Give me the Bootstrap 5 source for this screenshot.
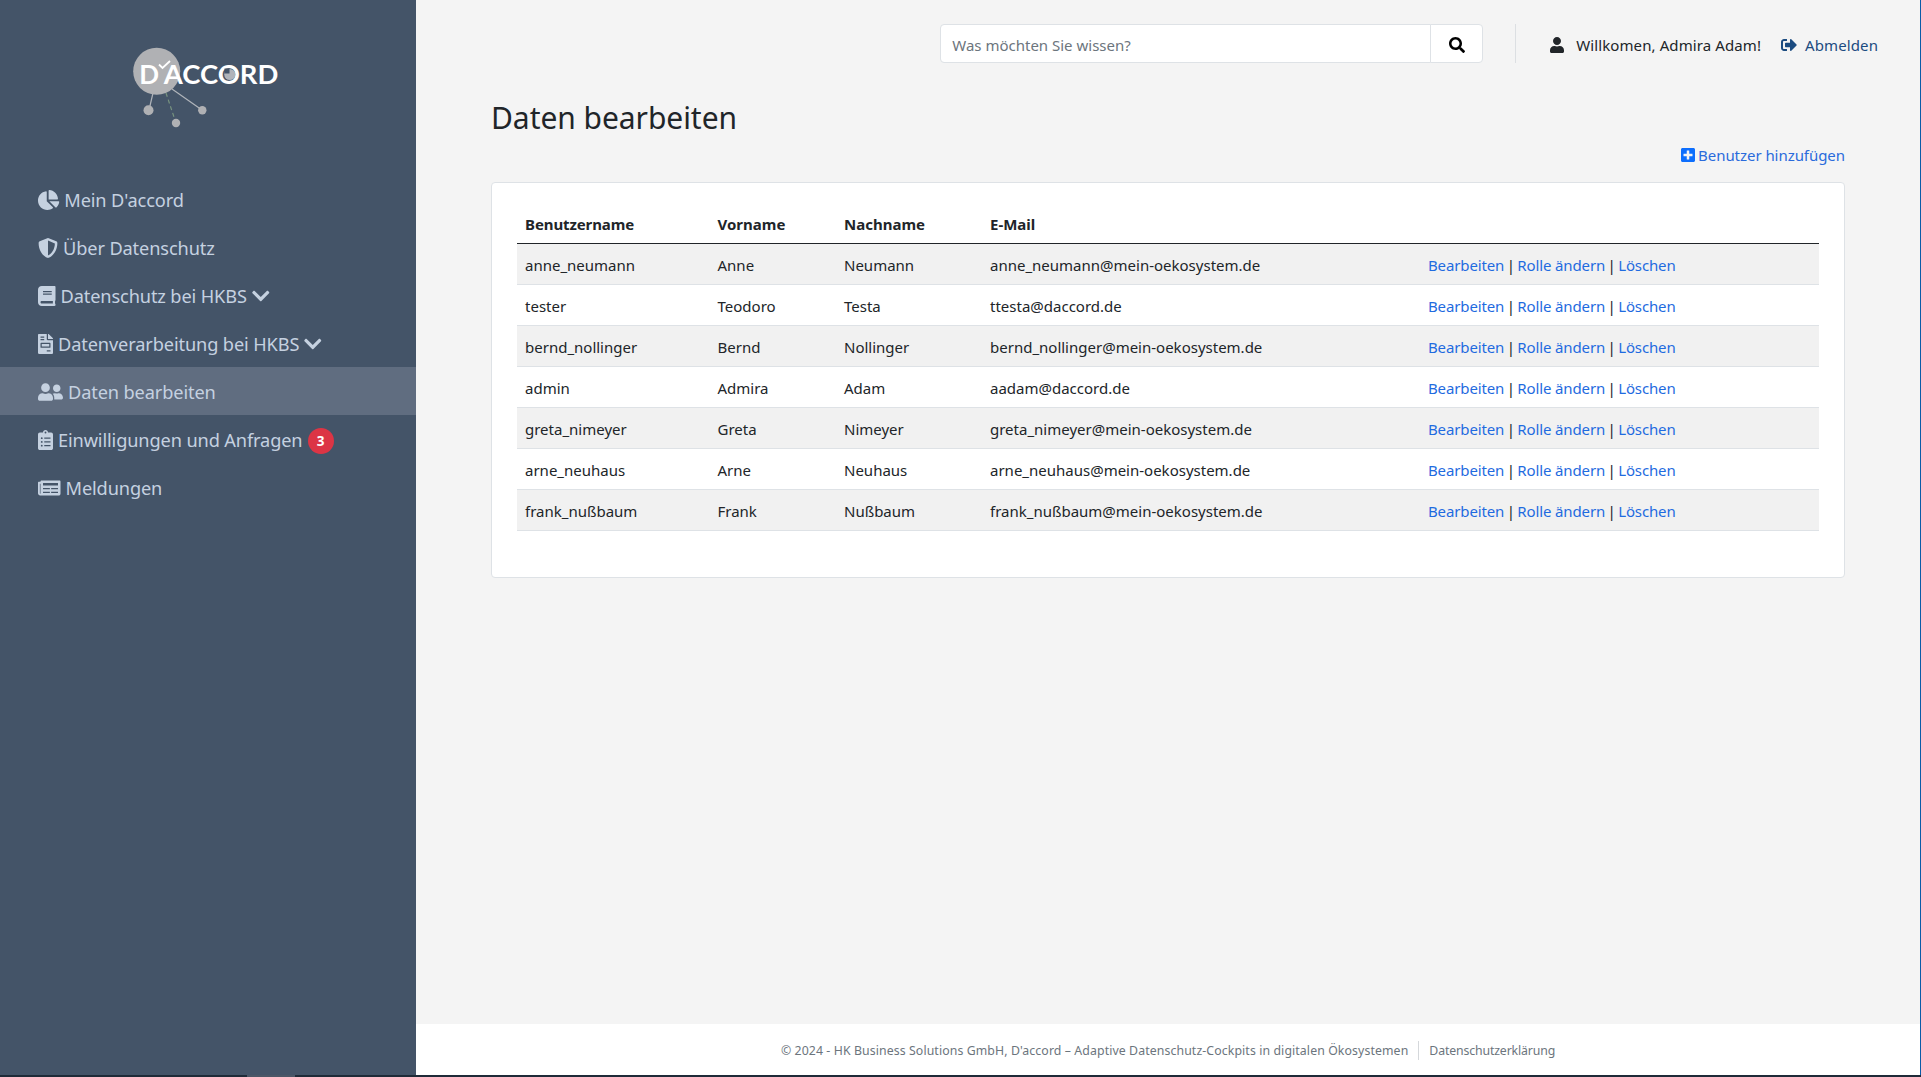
<!DOCTYPE html>
<html lang="de">
<head>
<meta charset="utf-8">
<title>Daten bearbeiten - D'accord</title>
<link href="https://cdn.jsdelivr.net/npm/bootstrap@5.3.0/dist/css/bootstrap.min.css" rel="stylesheet">
<style>
body{font-family:"Noto Sans","Open Sans",sans-serif;font-size:15px;line-height:24px;background:#f4f4f4;color:#212529;height:1077px;overflow:hidden}
a{text-decoration:none;color:#1f6be0}
svg{fill:currentColor}
.ico{height:1em;width:auto;overflow:visible;flex:none}
.app-shell{height:1075px;border-right:1px solid #0a5ca8}
.side{width:416px;background:#445468}
.logo-box{height:175px}
.side .nav-link{height:48px;padding:2px 0 0 38px;color:#c5d1e0;font-size:18.2px;letter-spacing:-.12px;display:flex;align-items:center;gap:5px;border-radius:0}
.side .nav-link.active{background:#606d80}
.side .ico{font-size:20px}
.side .count{width:26px;height:26px;font-size:13.5px;line-height:26px;padding:0;margin-top:1px}
.topbar{height:88px;padding:24px 42px 25px 0}
.search{width:543px;height:39px}
.search .form-control{font-size:15px;border-color:#dee2e6;padding:3px 11px 0;border-radius:4px 0 0 4px}
.search .form-control::placeholder{color:#6c757d;opacity:1}
.search .btn{width:53px;background:#fff;border:1px solid #dee2e6;border-radius:0 4px 4px 0;color:#000;padding:0}
.search .ico,.topbar .ico{font-size:16px}
.who{border-left:1px solid #dcdfe2;margin-left:32px;padding:2px 0 0 34px;letter-spacing:.1px}
.logout{color:#1b4b80}
.content-area{padding:0 75px}
h1{font-size:30px;line-height:38px;font-weight:400;margin:11px 0 6px;letter-spacing:-.05px}
.add-link{color:#0d6efd;letter-spacing:-.05px}
.add-link span{color:#2a6bdc}
.add-link .ico{font-size:16px;margin-right:3px}
.panel{border:1px solid #dee2e6;border-radius:4px;background:#fff;padding:20px 25px;height:396px;margin-top:15px}
.table{table-layout:fixed;--bs-table-striped-bg:#f1f1f1;border-color:#dee2e6;margin:0;--bs-table-color:#212529}
.table>thead>tr>th{border-bottom:1px solid #212529}
.table>thead>tr>th:first-child{letter-spacing:-.1px}
.table>:not(caption)>*>*{padding:9px 8px 7px}
.table thead tr{height:40px}
.table tbody tr{height:41px}
.table .c-user{width:192.5px}
.table .c-first{width:126.5px}
.table .c-last{width:146px}
.table .c-mail{width:438px}
.acts{word-spacing:-1.5px}
.acts a{word-spacing:0;letter-spacing:-.13px}
.foot{height:51px;background:#fff;color:#6c757d;font-size:12.3px;line-height:19px;padding-top:2px;letter-spacing:.1px}
.foot a{color:#6c757d;border-left:1px solid #d5d8db;margin-left:10px;padding-left:10px;letter-spacing:-.14px}
.taskbar{height:2px;background:#1f2b38}
.taskbar div{width:48px;height:2px;margin-left:247px;background:#4c5767}
</style>
<script src="https://cdn.jsdelivr.net/npm/bootstrap@5.3.0/dist/js/bootstrap.bundle.min.js"></script>
</head>
<body>
<div class="app-shell d-flex">
<aside class="side flex-shrink-0">
<div class="logo-box">
<svg width="416" height="175" viewBox="0 0 416 175"><g fill="#b0b1b4" stroke="#b0b4ba" stroke-width="1.2"><path d="M153 93L149 110M172 89L202 110" fill="none"/><path d="M166 93L175 120" stroke="#77937f" stroke-dasharray="4 3" fill="none"/><g stroke="none"><circle cx="156.700" cy="71.300" r="23.500"/><circle cx="148.500" cy="110.300" r="5"/><circle cx="176" cy="123" r="4.200"/><circle cx="202.300" cy="110.300" r="4.200"/></g></g><g fill="#fff" font-family="Lato,sans-serif" font-weight="700" font-size="26"><text x="139.300" y="83.500">D</text><text x="163.800" y="83.500" textLength="114.500" lengthAdjust="spacingAndGlyphs">ACCORD</text></g><circle cx="229.800" cy="74.500" r="5.600" fill="#b0b4ba"/><path d="M229.500 73.500v-5h-5v5z" fill="#445468"/><path d="M159 64.500L162.500 68L170 61" fill="none" stroke="#fff" stroke-width="1.8"/></svg>
</div>
<nav class="nav flex-column">
<a class="nav-link" href="#"><svg class="ico" viewBox="0 0 544 512"><path d="M527.79 288H290.5l158.03 158.03c6.04 6.04 15.98 6.53 22.19.68 38.7-36.46 65.32-85.61 73.13-140.86 1.34-9.46-6.51-17.85-16.06-17.85zm-15.83-64.8C503.72 103.74 408.26 8.28 288.8.04 279.68-.59 272 7.1 272 16.24V240h223.77c9.14 0 16.82-7.68 16.19-16.8zM224 288V50.71c0-9.55-8.39-17.4-17.84-16.06C86.99 51.49-4.1 155.6.14 280.37 4.5 408.51 114.83 513.59 243.03 511.98c50.4-.63 96.97-16.87 135.26-44.03 7.9-5.6 8.42-17.23 1.57-24.08L224 288z"/></svg><span>Mein D'accord</span></a>
<a class="nav-link" href="#"><svg class="ico" viewBox="0 0 512 512"><path d="M466.5 83.7l-192-80a48.15 48.15 0 0 0-36.9 0l-192 80C27.7 91.100 16 108.600 16 128c0 198.500 114.500 335.700 221.500 380.300 11.800 4.900 25.100 4.900 36.900 0C360.100 472.600 496 349.300 496 128c0-19.400-11.700-36.900-29.500-44.300zM256.100 446.300l-.1-381 175.900 73.300c-3.300 151.400-82.100 261.100-175.800 307.700z"/></svg><span>Über Datenschutz</span></a>
<a class="nav-link" href="#"><svg class="ico" viewBox="0 0 448 512"><path d="M448 360V24c0-13.300-10.700-24-24-24H96C43 0 0 43 0 96v320c0 53 43 96 96 96h328c13.300 0 24-10.700 24-24v-16c0-7.500-3.500-14.300-8.900-18.700-4.200-15.400-4.200-59.300 0-74.700 5.400-4.300 8.900-11.100 8.900-18.600zM128 134c0-3.300 2.700-6 6-6h212c3.300 0 6 2.700 6 6v20c0 3.300-2.700 6-6 6H134c-3.300 0-6-2.700-6-6v-20zm0 64c0-3.300 2.700-6 6-6h212c3.300 0 6 2.700 6 6v20c0 3.300-2.700 6-6 6H134c-3.300 0-6-2.700-6-6v-20zm253.400 250H96c-17.700 0-32-14.300-32-32 0-17.600 14.400-32 32-32h285.400c-1.900 17.100-1.900 46.900 0 64z"/></svg><span>Datenschutz bei HKBS</span><svg class="ico" viewBox="0 0 448 512"><path d="M207.029 381.476L12.686 187.132c-9.373-9.373-9.373-24.569 0-33.941l22.667-22.667c9.357-9.357 24.522-9.375 33.901-.04L224 284.505l154.745-154.021c9.379-9.335 24.544-9.317 33.901.04l22.667 22.667c9.373 9.373 9.373 24.569 0 33.941L240.971 381.476c-9.373 9.372-24.569 9.372-33.942 0z"/></svg></a>
<a class="nav-link" href="#"><svg class="ico" viewBox="0 0 384 512"><path d="M288 256H96v64h192v-64zm89-151L279.100 7c-4.500-4.500-10.600-7-17-7H256v128h128v-6.100c0-6.300-2.500-12.400-7-16.900zm-153 31V0H24C10.700 0 0 10.700 0 24v464c0 13.300 10.700 24 24 24h336c13.300 0 24-10.700 24-24V160H248c-13.200 0-24-10.800-24-24zM64 72c0-4.420 3.580-8 8-8h80c4.420 0 8 3.580 8 8v16c0 4.420-3.580 8-8 8H72c-4.420 0-8-3.580-8-8V72zm0 64c0-4.420 3.580-8 8-8h80c4.420 0 8 3.580 8 8v16c0 4.420-3.580 8-8 8H72c-4.420 0-8-3.580-8-8v-16zm256 304c0 4.420-3.580 8-8 8h-80c-4.420 0-8-3.580-8-8v-16c0-4.420 3.580-8 8-8h80c4.420 0 8 3.580 8 8v16zm0-200v96c0 8.840-7.160 16-16 16H80c-8.840 0-16-7.160-16-16v-96c0-8.840 7.160-16 16-16h224c8.840 0 16 7.160 16 16z"/></svg><span>Datenverarbeitung bei HKBS</span><svg class="ico" viewBox="0 0 448 512"><path d="M207.029 381.476L12.686 187.132c-9.373-9.373-9.373-24.569 0-33.941l22.667-22.667c9.357-9.357 24.522-9.375 33.901-.04L224 284.505l154.745-154.021c9.379-9.335 24.544-9.317 33.901.04l22.667 22.667c9.373 9.373 9.373 24.569 0 33.941L240.971 381.476c-9.373 9.372-24.569 9.372-33.942 0z"/></svg></a>
<a class="nav-link active" href="#"><svg class="ico" viewBox="0 0 640 512"><path d="M192 256c61.900 0 112-50.100 112-112S253.900 32 192 32 80 82.100 80 144s50.100 112 112 112zm76.800 32h-8.300c-20.800 10-43.900 16-68.500 16s-47.600-6-68.500-16h-8.300C51.600 288 0 339.600 0 403.200V432c0 26.500 21.500 48 48 48h288c26.500 0 48-21.500 48-48v-28.800c0-63.600-51.600-115.200-115.200-115.200zM480 256c53 0 96-43 96-96s-43-96-96-96-96 43-96 96 43 96 96 96zm48 32h-3.800c-13.900 4.800-28.600 8-44.200 8s-30.300-3.200-44.200-8H432c-20.400 0-39.200 5.900-55.700 15.400 24.400 26.300 39.700 61.200 39.700 99.800v38.400c0 2.200-.5 4.300-.6 6.400H592c26.500 0 48-21.500 48-48 0-61.900-50.100-112-112-112z"/></svg><span>Daten bearbeiten</span></a>
<a class="nav-link" href="#"><svg class="ico" viewBox="0 0 384 512"><path fill-rule="evenodd" d="M336 64h-80c0-35.300-28.700-64-64-64s-64 28.700-64 64H48C21.500 64 0 85.500 0 112v352c0 26.500 21.500 48 48 48h288c26.500 0 48-21.500 48-48V112c0-26.500-21.500-48-48-48zM96 424a24 24 0 1 1 0-48 24 24 0 0 1 0 48zm0-96a24 24 0 1 1 0-48 24 24 0 0 1 0 48zm0-96a24 24 0 1 1 0-48 24 24 0 0 1 0 48zm96-192a24 24 0 1 1 0 48 24 24 0 0 1 0-48zM160 384h160v32H160zM160 288h160v32H160zM160 192h160v32H160z"/></svg><span>Einwilligungen und Anfragen</span><span class="badge rounded-pill bg-danger count">3</span></a>
<a class="nav-link" href="#"><svg class="ico" viewBox="0 0 576 512"><path fill-rule="evenodd" d="M552 64H88c-13.255 0-24 10.745-24 24v8H24c-13.255 0-24 10.745-24 24v272c0 30.928 25.072 56 56 56h472c26.510 0 48-21.490 48-48V88c0-13.255-10.745-24-24-24zM56 400a8 8 0 0 1-8-8V144h16v248a8 8 0 0 1-8 8zM128 352h176v32H128zM336 352h176v32H336zM128 256h176v32H128zM336 256h176v32H336zM128 128h384v64H128z"/></svg><span>Meldungen</span></a>
</nav>
</aside>
<main class="flex-grow-1 d-flex flex-column">
<header class="topbar d-flex justify-content-end">
<form class="search input-group flex-nowrap"><input class="form-control" placeholder="Was möchten Sie wissen?"><button class="btn" type="button"><svg class="ico" viewBox="0 0 512 512"><path d="M505 442.700L405.300 343c-4.500-4.500-10.600-7-17-7H372c27.600-35.300 44-79.700 44-128C416 93.100 322.900 0 208 0S0 93.100 0 208s93.100 208 208 208c48.300 0 92.700-16.400 128-44v16.300c0 6.400 2.500 12.500 7 17l99.700 99.700c9.400 9.400 24.600 9.400 33.900 0l28.300-28.300c9.400-9.400 9.400-24.600.1-34zM208 336c-70.700 0-128-57.200-128-128 0-70.700 57.200-128 128-128 70.700 0 128 57.200 128 128 0 70.700-57.200 128-128 128z"/></svg></button></form>
<div class="who d-flex align-items-center"><svg class="ico me-2" viewBox="0 0 448 512"><path d="M224 256c70.700 0 128-57.300 128-128S294.700 0 224 0 96 57.300 96 128s57.300 128 128 128zm89.600 32h-16.700c-22.200 10.200-46.900 16-72.900 16s-50.600-5.800-72.900-16h-16.700C60.200 288 0 348.200 0 422.400V464c0 26.500 21.500 48 48 48h352c26.500 0 48-21.500 48-48v-41.600c0-74.200-60.200-134.400-134.400-134.400z"/></svg><span class="ms-1">Willkomen, Admira Adam!</span>
<a class="logout d-flex align-items-center ms-3 ps-1" href="#"><svg class="ico me-2" viewBox="0 0 512 512"><path d="M497 273L329 441c-15 15-41 4.500-41-17v-96H152c-13.300 0-24-10.700-24-24v-96c0-13.300 10.700-24 24-24h136V88c0-21.400 25.900-32 41-17l168 168c9.300 9.400 9.300 24.600 0 34zM192 436v-40c0-6.600-5.400-12-12-12H96c-17.700 0-32-14.300-32-32V160c0-17.700 14.300-32 32-32h84c6.600 0 12-5.400 12-12V76c0-6.600-5.400-12-12-12H96c-53 0-96 43-96 96v192c0 53 43 96 96 96h84c6.600 0 12-5.400 12-12z"/></svg><span>Abmelden</span></a></div>
</header>
<section class="content-area flex-grow-1">
<h1>Daten bearbeiten</h1>
<div class="d-flex justify-content-end"><a class="add-link d-flex align-items-center" href="#"><svg class="ico" viewBox="0 0 448 512"><path d="M400 32H48C21.500 32 0 53.500 0 80v352c0 26.500 21.500 48 48 48h352c26.500 0 48-21.500 48-48V80c0-26.500-21.500-48-48-48zm-32 252c0 6.600-5.400 12-12 12h-92v92c0 6.600-5.400 12-12 12h-56c-6.600 0-12-5.400-12-12v-92H92c-6.600 0-12-5.400-12-12v-56c0-6.600 5.400-12 12-12h92v-92c0-6.600 5.400-12 12-12h56c6.600 0 12 5.400 12 12v92h92c6.600 0 12 5.400 12 12v56z"/></svg><span>Benutzer hinzufügen</span></a></div>
<div class="panel">
<table class="table table-striped">
<colgroup><col class="c-user"><col class="c-first"><col class="c-last"><col class="c-mail"><col></colgroup>
<thead><tr><th>Benutzername</th><th>Vorname</th><th>Nachname</th><th>E-Mail</th><th></th></tr></thead>
<tbody>
<tr><td>anne_neumann</td><td>Anne</td><td>Neumann</td><td>anne_neumann@mein-oekosystem.de</td><td class="acts"><a href="#">Bearbeiten</a> | <a href="#">Rolle ändern</a> | <a href="#">Löschen</a></td></tr>
<tr><td>tester</td><td>Teodoro</td><td>Testa</td><td>ttesta@daccord.de</td><td class="acts"><a href="#">Bearbeiten</a> | <a href="#">Rolle ändern</a> | <a href="#">Löschen</a></td></tr>
<tr><td>bernd_nollinger</td><td>Bernd</td><td>Nollinger</td><td>bernd_nollinger@mein-oekosystem.de</td><td class="acts"><a href="#">Bearbeiten</a> | <a href="#">Rolle ändern</a> | <a href="#">Löschen</a></td></tr>
<tr><td>admin</td><td>Admira</td><td>Adam</td><td>aadam@daccord.de</td><td class="acts"><a href="#">Bearbeiten</a> | <a href="#">Rolle ändern</a> | <a href="#">Löschen</a></td></tr>
<tr><td>greta_nimeyer</td><td>Greta</td><td>Nimeyer</td><td>greta_nimeyer@mein-oekosystem.de</td><td class="acts"><a href="#">Bearbeiten</a> | <a href="#">Rolle ändern</a> | <a href="#">Löschen</a></td></tr>
<tr><td>arne_neuhaus</td><td>Arne</td><td>Neuhaus</td><td>arne_neuhaus@mein-oekosystem.de</td><td class="acts"><a href="#">Bearbeiten</a> | <a href="#">Rolle ändern</a> | <a href="#">Löschen</a></td></tr>
<tr><td>frank_nußbaum</td><td>Frank</td><td>Nußbaum</td><td>frank_nußbaum@mein-oekosystem.de</td><td class="acts"><a href="#">Bearbeiten</a> | <a href="#">Rolle ändern</a> | <a href="#">Löschen</a></td></tr>
</tbody></table>
</div>
</section>
<footer class="foot d-flex justify-content-center align-items-center"><span>© 2024 - HK Business Solutions GmbH, D'accord – Adaptive Datenschutz-Cockpits in digitalen Ökosystemen</span><a href="#">Datenschutzerklärung</a></footer>
</main>
</div>
<div class="taskbar"><div></div></div>
</body>
</html>
